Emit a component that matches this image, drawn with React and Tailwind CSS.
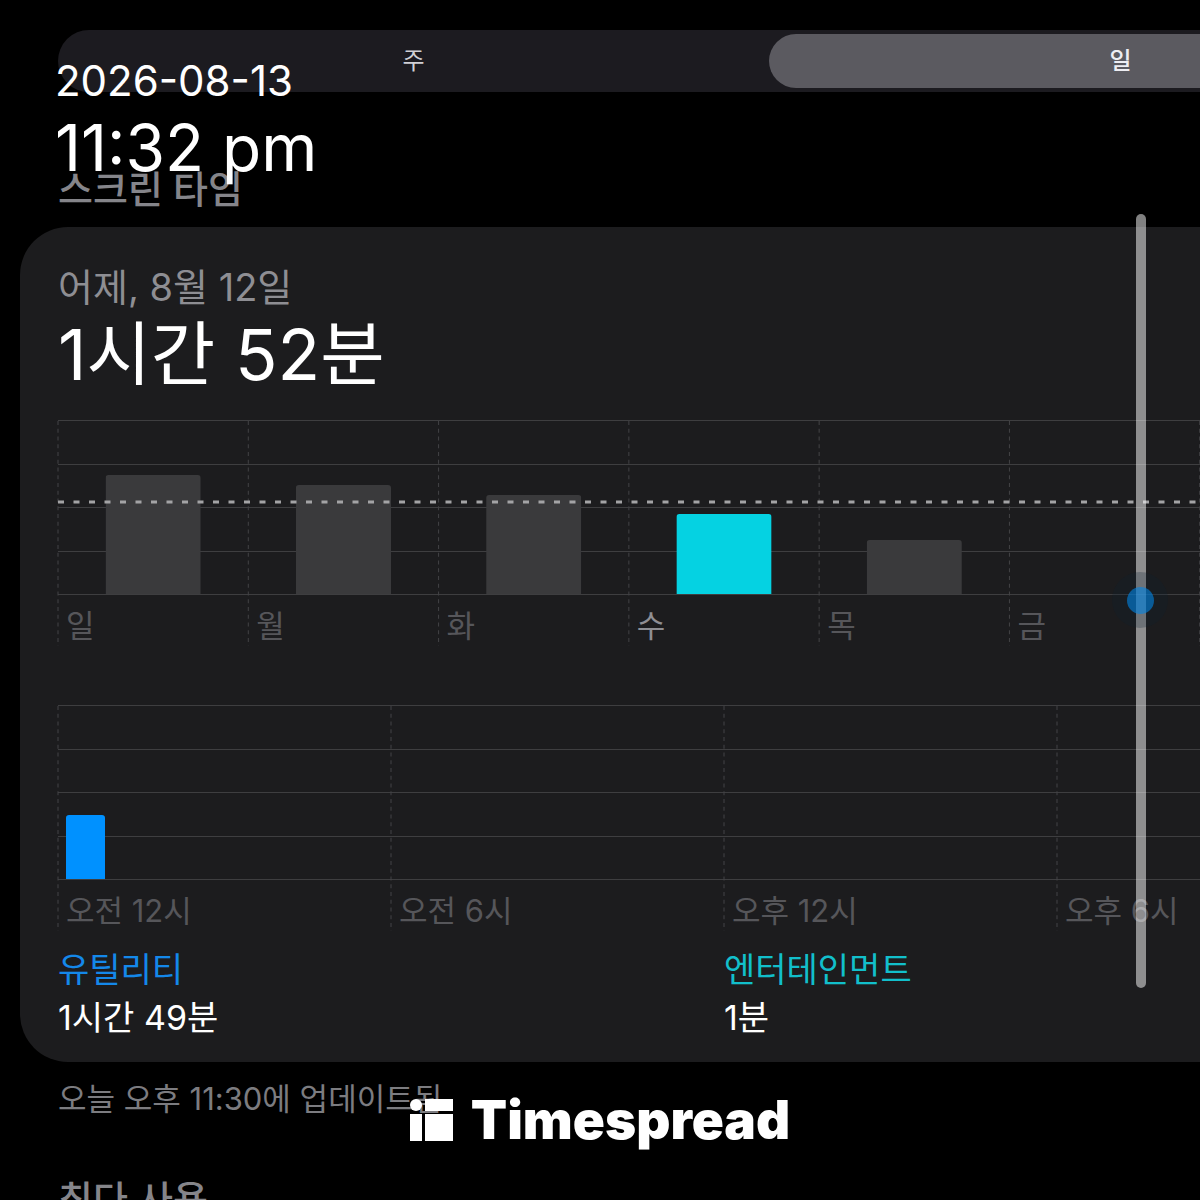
import React, { useState } from 'react';

const gridRows = [0, 44, 87, 131, 174];

const days = [
  { label: '일', height: 119 },
  { label: '월', height: 109 },
  { label: '화', height: 99 },
  { label: '수', height: 80, active: true },
  { label: '목', height: 54 },
  { label: '금', height: 0 },
  { label: '토', height: 0 },
];

const hours = ['오전 12시', '오전 6시', '오후 12시', '오후 6시'];

const categories = [
  { name: '유틸리티', time: '1시간 49분', color: 'text-[#1488ea]' },
  { name: '엔터테인먼트', time: '1분', color: 'text-[#12bfcb]' },
];

function Grid({ columns }) {
  return (
    <>
      {gridRows.map((y) => (
        <rect key={y} x="0" y={y} width="100%" height="1" fill="#3e3e40" />
      ))}
      {Array.from({ length: columns }, (_, i) => (
        <line
          key={i}
          x1={`${(i * 100) / columns}%`}
          x2={`${(i * 100) / columns}%`}
          y1="1"
          y2="226"
          stroke="#434346"
          strokeWidth="1"
          strokeDasharray="4 3.75"
        />
      ))}
    </>
  );
}

// the inner svg clips the rounded bottom corners
function Bar({ x, width, height, fill }) {
  return (
    <svg x={x} y={174 - height} width={width} height={height}>
      <rect width="100%" height={height + 6} rx="3" fill={fill} />
    </svg>
  );
}

function WeekChart() {
  return (
    <div className="relative h-[226px] pt-[182px]">
      <svg className="absolute inset-0 h-full w-full overflow-visible" role="img" aria-label="요일별 사용 시간">
        <Grid columns={7} />
        {days.map((day, i) => day.height > 0 && (
          <Bar
            key={day.label}
            x={`${((i + 0.25) * 100) / 7}%`}
            width={`${50 / 7}%`}
            height={day.height}
            fill={day.active ? '#05d2e2' : '#3a3a3c'}
          />
        ))}
        <line x1="0" x2="100%" y1="82" y2="82" stroke="#a3a3a5" strokeWidth="3" strokeDasharray="6 9.5" />
      </svg>
      <div className="relative grid grid-cols-7 text-[31px] leading-[48px]">
        {days.map((day) => (
          <span key={day.label} className={day.active ? 'pl-2 text-[#8e8e93]' : 'pl-2 text-[#56565a]'}>
            {day.label}
          </span>
        ))}
      </div>
    </div>
  );
}

function HourChart() {
  return (
    <div className="relative h-[226px] pt-[182px]">
      <svg className="absolute inset-0 h-full w-full overflow-visible" role="img" aria-label="시간별 사용 시간">
        <Grid columns={4} />
        <Bar x="0.6%" width="2.93%" height={64} fill="#0091ff" />
      </svg>
      <div className="relative grid grid-cols-4 text-[31px] leading-[48px] text-[#56565a]">
        {hours.map((hour) => (
          <span key={hour} className="pl-2">{hour}</span>
        ))}
      </div>
    </div>
  );
}

function Logo() {
  return (
    <svg width="43" height="42" viewBox="0 0 43 42" fill="#fff" aria-hidden="true">
      <circle cx="6" cy="6" r="6" />
      <rect x="15" y="0" width="28" height="12" />
      <rect x="0" y="15" width="12" height="27" />
      <rect x="15" y="15" width="28" height="27" />
    </svg>
  );
}

function App() {
  const [range, setRange] = useState('day');

  const tabClass = (value) =>
    value === range
      ? 'rounded-full bg-[#5b5a60] font-medium text-[#ededf2]'
      : 'rounded-full text-[#d0d0d5]';

  return (
    <div className="relative h-screen overflow-hidden bg-black font-['Inter','Noto_Sans_CJK_KR',sans-serif]">
      <div className="flow-root">
        <div className="mt-[30px] -mr-[276px] ml-[58px] grid h-[62px] grid-cols-2 gap-1 rounded-full bg-[#1c1b20] p-1 text-2xl">
          <button className={tabClass('week')} onClick={() => setRange('week')}>주</button>
          <button className={tabClass('day')} onClick={() => setRange('day')}>일</button>
        </div>

        <h2 className="mt-[73px] ml-[58px] text-[38px] leading-[48px] font-medium text-[#85858a]">스크린 타임</h2>

        <section className="mt-[14px] -mr-[228px] ml-5 rounded-[48px] bg-[#1c1c1e] px-[38px] pt-9 pb-5">
          <p className="text-[38px] leading-[48px] text-[#8e8e93]">어제, 8월 12일</p>
          <p className="mt-1 mb-[25px] text-[70px] leading-[80px] text-white">1시간 52분</p>
          <WeekChart />
          <div className="mt-[59px]">
            <HourChart />
          </div>
          <div className="mt-[15px] grid grid-cols-2 text-[34px] leading-[48px]">
            {categories.map((category) => (
              <div key={category.name}>
                <p className={category.color}>{category.name}</p>
                <p className="text-white">{category.time}</p>
              </div>
            ))}
          </div>
        </section>

        <p className="mt-[17px] ml-[58px] text-[31px] leading-10 text-[#7c7c80]">오늘 오후 11:30에 업데이트됨</p>
        <h2 className="mt-[56px] ml-[58px] text-[38px] leading-[48px] font-medium text-[#85858a]">최다 사용</h2>
      </div>

      {/* scroll indicator and touch dot */}
      <div className="absolute top-[214px] right-[54px] h-[774px] w-[10px] rounded-full bg-white/50" />
      <div className="absolute top-[572px] right-[32px] flex size-14 items-center justify-center rounded-full bg-[#0a2030]/25">
        <span className="size-[27px] rounded-full bg-[#0086e6]/60" />
      </div>

      {/* timestamp */}
      <div className="absolute top-[56px] left-[55px] text-white">
        <p className="text-[42px] leading-[50px]">2026-08-13</p>
        <p className="text-[64px] leading-[84px]">11:32 pm</p>
      </div>

      {/* brand mark */}
      <div className="absolute inset-x-0 bottom-[52px] flex items-center justify-center gap-[18px]">
        <Logo />
        <span className="text-[53px] leading-[56px] font-black text-white">Timespread</span>
      </div>
    </div>
  );
}

export default App;
